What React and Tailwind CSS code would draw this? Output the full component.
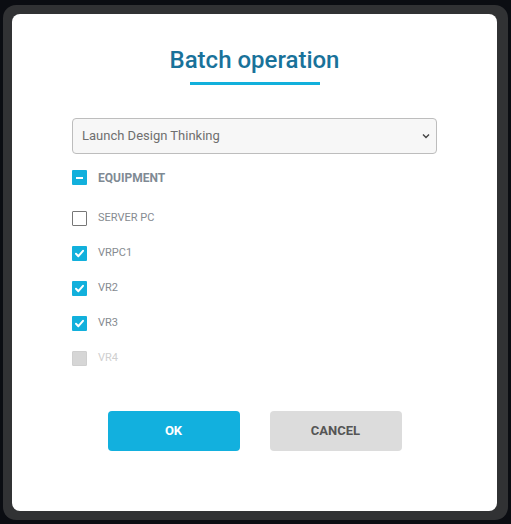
import React, {useState} from 'react';

const items = [
    {name: "SERVER PC", checked: false, disabled: false},
    {name: "VRPC1", checked: true, disabled: false},
    {name: "VR2", checked: true, disabled: false},
    {name: "VR3", checked: true, disabled: false},
    {name: "VR4", checked: false, disabled: true},
]

function Box({checked, disabled, partial}) {
    if (disabled) {
        return <span className="w-[15px] h-[15px] bg-[#d6d6d6] border border-[#cfcfcf] rounded-[1px] shrink-0"></span>
    }
    if (partial) {
        return (
            <span className="w-[15px] h-[15px] bg-[#12b0dc] rounded-[1px] shrink-0 flex items-center justify-center">
                <span className="w-[7px] h-[2px] bg-white"></span>
            </span>
        )
    }
    if (checked) {
        return (
            <span className="w-[15px] h-[15px] bg-[#12b0dc] rounded-[1px] shrink-0 flex items-center justify-center">
                <svg width="11" height="11" viewBox="0 0 11 11" fill="none">
                    <path d="M2 5.8 L4.4 8.2 L9 2.8" stroke="white" strokeWidth="2" strokeLinecap="round" strokeLinejoin="round"/>
                </svg>
            </span>
        )
    }
    return <span className="w-[15px] h-[15px] bg-white border border-[#777] rounded-[1px] shrink-0"></span>
}

function App() {
    const [selected, setSelected] = useState("Launch Design Thinking")

    return (
        <div className="w-[511px] h-[524px] bg-[#0b0d12] pt-[5px] px-[3px] font-['Roboto',sans-serif]">
            <div className="w-[505px] h-[515px] bg-[#313234] rounded-[13px] p-[9px]">
                <div className="w-[485px] h-[497px] bg-white rounded-[8px] flex flex-col items-center pt-[29px]">
                    <h1 className="text-[24px] leading-[34px] font-medium text-[#19729a]">Batch operation</h1>
                    <div className="w-[130px] h-[3px] bg-[#12b0dc] mt-[5px]"></div>

                    <div className="w-[365px] mt-[33px] flex flex-col">
                        <div className="relative">
                            <select
                                value={selected}
                                onChange={(e) => setSelected(e.target.value)}
                                className="w-full h-[36px] appearance-none bg-[#f7f7f7] border border-[#bdbdbd] rounded-[4px] pl-[9px] text-[13px] text-[#6f6f6f] outline-none">
                                <option>Launch Design Thinking</option>
                            </select>
                            <svg className="absolute right-[7px] top-[15px]" width="8" height="6" viewBox="0 0 8 6" fill="none">
                                <path d="M1 1.5 L4 4.5 L7 1.5" stroke="#444" strokeWidth="1.4"/>
                            </svg>
                        </div>

                        <div className="flex items-center h-[15px] mt-[16px]">
                            <Box partial/>
                            <span className="ml-[11px] text-[12px] font-bold text-[#7f8a94]">EQUIPMENT</span>
                        </div>

                        <div className="flex flex-col mt-[26px] gap-[20px]">
                            {items.map((item) => (
                                <div key={item.name} className="flex items-center h-[15px]">
                                    <Box checked={item.checked} disabled={item.disabled}/>
                                    <span className={"ml-[11px] text-[11px] " + (item.disabled ? "text-[#cfcfcf]" : "text-[#868b91]")}>{item.name}</span>
                                </div>
                            ))}
                        </div>
                    </div>

                    <div className="flex gap-[30px] mt-[45px]">
                        <button className="w-[132px] h-[40px] bg-[#12b0de] rounded-[4px] text-white text-[13px] font-bold">OK</button>
                        <button className="w-[132px] h-[40px] bg-[#dcdcdc] rounded-[4px] text-[#555] text-[13px] font-bold">CANCEL</button>
                    </div>
                </div>
            </div>
        </div>
    );
}

export default App;
